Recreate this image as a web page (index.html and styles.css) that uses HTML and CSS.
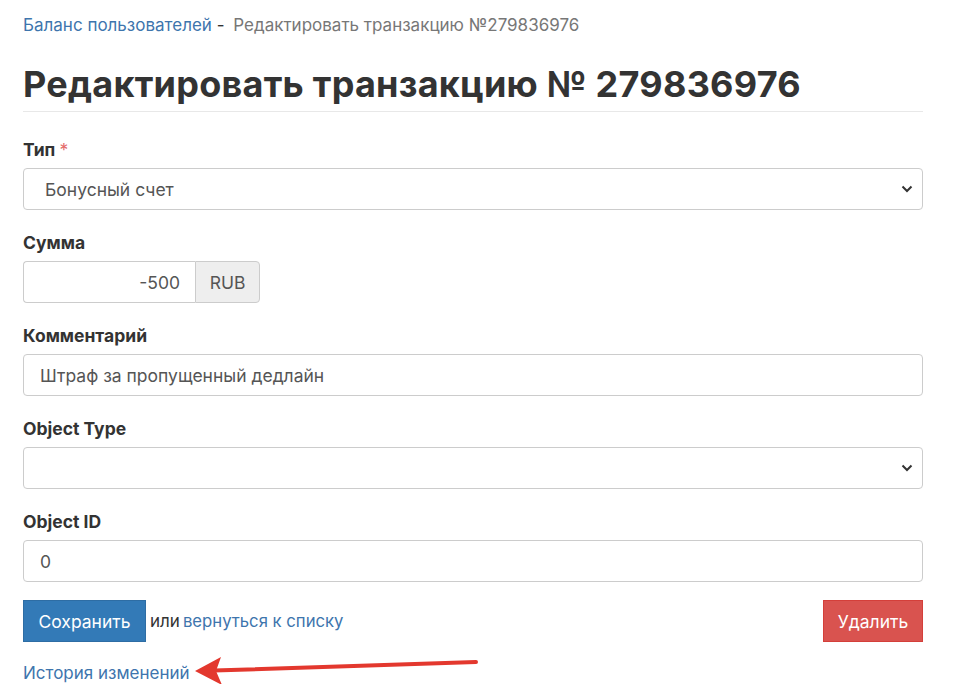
FILE: index.html
```html
<!DOCTYPE html>
<html lang="ru">
<head>
<meta charset="utf-8">
<link rel="stylesheet" href="styles.css">
</head>
<body>
<div class="page">
  <div class="breadcrumb"><a href="#">Баланс пользователей</a><span class="sep"> - </span><span class="current">Редактировать транзакцию №279836976</span></div>
  <h1 class="title">Редактировать транзакцию № 279836976</h1>
  <form class="form">
    <div class="field">
      <label class="label">Тип <span class="req">*</span></label>
      <div class="select"><span class="select-text">Бонусный счет</span>
        <svg class="chev" viewBox="0 0 12 8" width="12" height="8"><path d="M1.5 1.5 L6 6 L10.5 1.5" fill="none" stroke="#333" stroke-width="2"/></svg>
      </div>
    </div>
    <div class="field">
      <label class="label">Сумма</label>
      <div class="input-group">
        <div class="input amount">-500</div>
        <div class="addon">RUB</div>
      </div>
    </div>
    <div class="field">
      <label class="label">Комментарий</label>
      <div class="input">Штраф за пропущенный дедлайн</div>
    </div>
    <div class="field">
      <label class="label">Object Type</label>
      <div class="select"><span class="select-text"></span>
        <svg class="chev" viewBox="0 0 12 8" width="12" height="8"><path d="M1.5 1.5 L6 6 L10.5 1.5" fill="none" stroke="#333" stroke-width="2"/></svg>
      </div>
    </div>
    <div class="field">
      <label class="label">Object ID</label>
      <div class="input">0</div>
    </div>
    <div class="actions">
      <div class="left">
        <button type="button" class="btn btn-primary">Сохранить</button>
        <span class="or">или</span>
        <a href="#" class="link back">вернуться к списку</a>
      </div>
      <button type="button" class="btn btn-danger">Удалить</button>
    </div>
  </form>
  <div class="history"><a href="#" class="link">История изменений</a></div>
</div>
<svg class="arrow" width="955" height="698" viewBox="0 0 955 698">
  <line x1="476" y1="662" x2="214" y2="670.5" stroke="#e3382e" stroke-width="4" stroke-linecap="round"/>
  <path d="M195 671 L221 657 L216 671 L222 685 Z" fill="#e3382e"/>
</svg>
</body>
</html>
```
FILE: styles.css
```css
html, body {
  margin: 0;
  padding: 0;
  background: #fff;
}
body {
  font-family: Inter, "Noto Sans", sans-serif;
  color: #333;
  font-size: 17px;
  position: relative;
}
.page {
  width: 900px;
  padding: 14px 0 0 23px;
}
a {
  color: #3e75ad;
  text-decoration: none;
}
.breadcrumb {
  font-size: 17px;
  line-height: 22px;
  color: #777;
}
.breadcrumb .sep {
  color: #333;
  white-space: pre;
}
.breadcrumb .current {
  margin-left: 4px;
}
.title {
  margin: 25px 0 0;
  font-size: 36px;
  font-weight: 700;
  line-height: 46px;
  color: #333;
  padding-bottom: 4px;
  border-bottom: 1px solid #e8e8e8;
  letter-spacing: 0.25px;
}
.form {
  display: flex;
  flex-direction: column;
  margin-top: 28px;
}
.field {
  display: flex;
  flex-direction: column;
  margin-bottom: 23px;
}
.label {
  font-weight: 700;
  font-size: 17.5px;
  line-height: 20px;
  margin-bottom: 8px;
}
.req {
  color: #e46b6b;
  font-weight: 400;
}
.select, .input {
  box-sizing: border-box;
  height: 42px;
  border: 1px solid #ccc;
  border-radius: 4px;
  display: flex;
  align-items: center;
  padding: 0 16px 0 16px;
  font-size: 17.5px;
  color: #555;
}
.select {
  justify-content: space-between;
  padding: 0 9px 0 21px;
}
.chev {
  display: block;
}
.input-group {
  display: flex;
  width: 237px;
}
.input.amount {
  flex: 1;
  justify-content: flex-end;
  border-radius: 4px 0 0 4px;
  padding-right: 15px;
  border-right: none;
}
.addon {
  box-sizing: border-box;
  width: 65px;
  height: 42px;
  border: 1px solid #ccc;
  border-radius: 0 4px 4px 0;
  background: #eee;
  display: flex;
  align-items: center;
  justify-content: center;
  color: #555;
  font-size: 17.5px;
}
.actions {
  display: flex;
  justify-content: space-between;
  align-items: center;
  margin-top: -5px;
}
.left {
  display: flex;
  align-items: center;
}
.btn {
  box-sizing: border-box;
  height: 42px;
  border: 1px solid transparent;
  border-radius: 0;
  color: #fff;
  font-family: inherit;
  font-size: 17.5px;
  padding: 0 10px;
  cursor: pointer;
}
.btn-primary {
  background: #337ab7;
  border-color: #2e6da4;
  width: 123px;
}
.btn-danger {
  background: #d9534f;
  border-color: #d43f3a;
  width: 100px;
}
.or {
  margin: 0 3px 0 4px;
  color: #333;
}
.link {
  color: #3e75ad;
}
.back {
  font-size: 16.7px;
}
.history {
  margin-top: 20px;
  font-size: 17px;
  line-height: 22px;
}
.arrow {
  position: absolute;
  left: 0;
  top: 0;
  pointer-events: none;
}
```
